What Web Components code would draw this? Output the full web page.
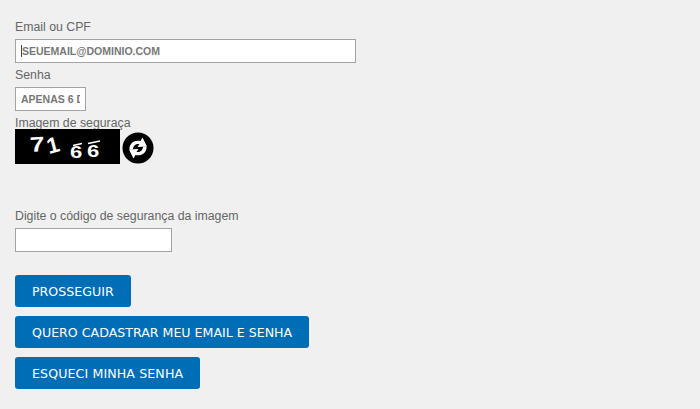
<!DOCTYPE html>
<html lang="pt"><head><meta charset="utf-8"><title>Login</title>
<style>html,body{margin:0;background:#f0f0f0;height:409px;overflow:hidden}</style></head>
<body>
<login-form>
  <form-field label="Email ou CPF" value="SEUEMAIL@DOMINIO.COM" width="341" caret></form-field>
  <form-field label="Senha" value="APENAS 6 DÍGITOS" width="71"></form-field>
  <captcha-box label="Imagem de seguraça"></captcha-box>
  <form-field label="Digite o código de segurança da imagem" width="157" style="margin-top:45px"></form-field>
  <div slot="actions" style="display:contents">
    <blue-button>PROSSEGUIR</blue-button>
    <blue-button>QUERO CADASTRAR MEU EMAIL E SENHA</blue-button>
    <blue-button style="letter-spacing:.11px">ESQUECI MINHA SENHA</blue-button>
  </div>
</login-form>
<script>
class LoginForm extends HTMLElement{constructor(){super();this.attachShadow({mode:'open'}).innerHTML=`<style>
:host{display:block;padding:20px 15px 0;font:12px/14px "Liberation Sans",Arial,sans-serif;color:#666}
.a{display:flex;flex-direction:column;align-items:flex-start;gap:9px;margin-top:23px}
</style><slot></slot><div class="a"><slot name="actions"></slot></div>`}}
class FormField extends HTMLElement{constructor(){super();this.attachShadow({mode:'open'})}
connectedCallback(){const w=this.getAttribute('width'),v=this.getAttribute('value')||'',c=this.hasAttribute('caret');
this.shadowRoot.innerHTML=`<style>
:host{display:block;margin-bottom:5px}
label{display:block;height:14px;line-height:14px;font-size:12.3px;color:#666;margin-bottom:5px}
.i{box-sizing:border-box;height:24px;border:1px solid #a3a3a3;background:#fff;display:flex;align-items:center;white-space:nowrap;font:bold 10.5px "Liberation Sans",Arial,sans-serif;color:#777;padding:0 5px 1px}
.t{overflow:hidden;display:block;min-width:0;${c?'border-left:1px solid #444':''}}
</style><label>${this.getAttribute('label')}</label><div class="i" style="width:${w}px"><span class="t">${v}</span></div>`}}
class CaptchaBox extends HTMLElement{constructor(){super();this.attachShadow({mode:'open'})}
connectedCallback(){this.shadowRoot.innerHTML=`<style>
:host{display:block}
label{display:block;height:13px;line-height:14px;font-size:12.3px;color:#666}
.r{display:flex;align-items:flex-end;gap:2px}
svg{display:block}
text{font-family:"Liberation Sans",sans-serif;fill:#fff;font-weight:bold}
</style><label>${this.getAttribute('label')}</label>
<div class="r">
<svg width="105" height="35" viewBox="0 0 105 35"><rect width="105" height="35" fill="#000"/>
<text font-size="21" transform="translate(15.5 23) rotate(-4) scale(1.25 1)">7</text>
<text font-size="22" transform="translate(34 25) rotate(-15)">1</text>
<text font-size="17" transform="translate(55 29) scale(1.3 .92)">6</text>
<text font-size="17" transform="translate(72 28) scale(1.3 .92)">6</text>
<path d="M58 16.5L67 14.5M73 14.5L85 12" stroke="#fff" stroke-width="1.5" fill="none"/>
</svg>
<svg width="32" height="32" viewBox="0 0 32 32"><circle cx="16" cy="16" r="15.5" fill="#000"/>
<path d="M7.5 17.5C7 11 13 7.5 18.5 9L20.5 5.5L25 14.5L15.5 15L17.5 12C14 11.5 11 13.5 11 17.5Z" fill="#fff"/>
<path d="M24.5 14.5C25 21 19 24.5 13.5 23L11.5 26.5L7 17.5L16.5 17L14.5 20C18 20.5 21 18.5 21 14.5Z" fill="#fff"/></svg>
</div>`}}
class BlueButton extends HTMLElement{constructor(){super();this.attachShadow({mode:'open'}).innerHTML=`<style>
:host{display:inline-flex;align-items:center;height:32px;box-sizing:border-box;padding:0 17px;background:#006db7;color:#fff;border-radius:3px;font:12.6px "DejaVu Sans",Verdana,sans-serif;white-space:nowrap}
</style><slot></slot>`}}
customElements.define('login-form',LoginForm);customElements.define('form-field',FormField);customElements.define('captcha-box',CaptchaBox);customElements.define('blue-button',BlueButton);
</script>
</body></html>
